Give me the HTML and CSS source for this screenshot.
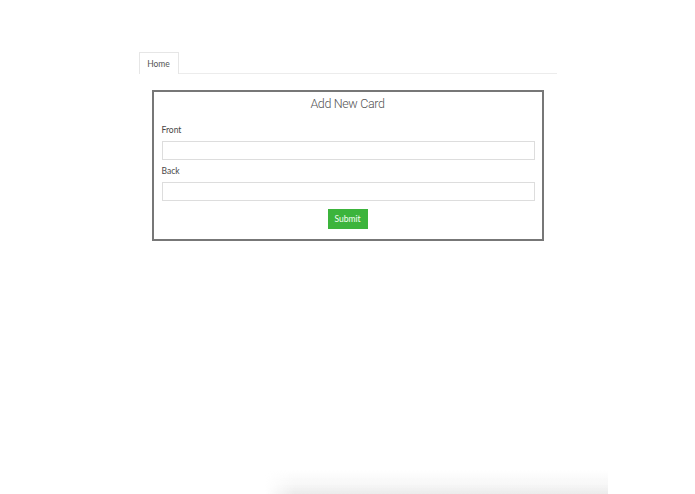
FILE: index.html
```html
<!DOCTYPE html>
<html lang="en">
<head>
<meta charset="utf-8">
<title>Add New Card</title>
<link rel="stylesheet" href="styles.css">
</head>
<body>
<div class="page">
  <nav class="tabs">
    <a class="tab active" href="#">Home</a>
  </nav>
  <form class="card" onsubmit="return false;">
    <h2 class="card-title">Add New Card</h2>
    <label class="field-label" for="front">Front</label>
    <input class="field-input" id="front" type="text">
    <label class="field-label" for="back">Back</label>
    <input class="field-input" id="back" type="text">
    <div class="actions">
      <button class="btn-submit" type="submit">Submit</button>
    </div>
  </form>
</div>
<div class="bottom-shade"></div>
</body>
</html>
```

FILE: styles.css
```css
html, body {
  margin: 0;
  padding: 0;
  background: #fff;
}
body {
  font-family: Lato, "Open Sans", "Liberation Sans", sans-serif;
  color: #333;
  min-height: 494px;
  position: relative;
  overflow: hidden;
}
.page {
  width: 418px;
  margin: 0 auto;
  padding-top: 52px;
}
.tabs {
  display: flex;
  border-bottom: 1px solid #ececec;
  height: 21px;
}
.tab {
  display: flex;
  align-items: center;
  justify-content: center;
  width: 38px;
  height: 21px;
  border: 1px solid #e6e6e6;
  border-bottom: none;
  background: #fff;
  margin-bottom: -1px;
  font-size: 8.5px;
  color: #555;
  text-decoration: none;
  box-sizing: content-box;
}
.card {
  width: 392px;
  box-sizing: border-box;
  margin: 16px auto 0;
  border: 2px solid #777;
  padding: 2px 8px 10px;
  display: flex;
  flex-direction: column;
}
.card-title {
  margin: 0;
  height: 20px;
  line-height: 20px;
  text-align: center;
  font-family: Roboto, Lato, sans-serif;
  font-weight: 300;
  font-size: 12.5px;
  letter-spacing: -0.35px;
  color: #555;
}
.field-label {
  display: block;
  height: 12px;
  line-height: 12px;
  font-size: 8.5px;
  color: #484848;
  margin-top: 10px;
  margin-bottom: 5px;
}
.field-input + .field-label {
  margin-top: 5px;
}
.field-input {
  display: block;
  width: 373px;
  height: 19px;
  box-sizing: border-box;
  border: 1px solid #ddd;
  margin: 0;
  padding: 0 4px;
  background: #fff;
  font-family: inherit;
  font-size: 9px;
}
.actions {
  display: flex;
  justify-content: center;
  margin-top: 8px;
}
.btn-submit {
  width: 40px;
  height: 20px;
  border: none;
  background: #3cb43c;
  color: #f4fff4;
  font-family: inherit;
  font-size: 8.5px;
  padding: 0;
  cursor: pointer;
}
.bottom-shade {
  position: absolute;
  left: 265px;
  width: 343px;
  bottom: 0;
  height: 24px;
  background: linear-gradient(to bottom, rgba(232,232,232,0), rgba(232,232,232,0.35) 60%, rgba(232,232,232,0.85));
  -webkit-mask-image: linear-gradient(to right, transparent, #000 30px);
  mask-image: linear-gradient(to right, transparent, #000 30px);
  pointer-events: none;
}
```
